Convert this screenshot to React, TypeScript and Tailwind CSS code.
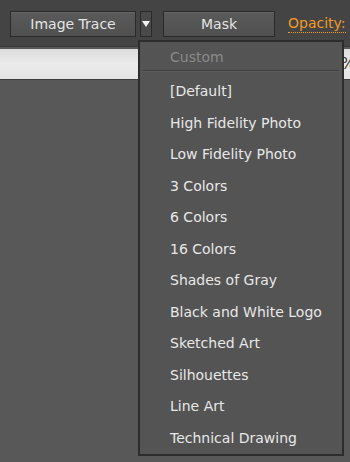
import React from "react";

const items = [
  "[Default]",
  "High Fidelity Photo",
  "Low Fidelity Photo",
  "3 Colors",
  "6 Colors",
  "16 Colors",
  "Shades of Gray",
  "Black and White Logo",
  "Sketched Art",
  "Silhouettes",
  "Line Art",
  "Technical Drawing",
];

export default function App() {
  return (
    <div
      className="relative w-[350px] h-[462px] overflow-hidden bg-[#585858] text-[#e8e8e8]"
      style={{ fontFamily: '"DejaVu Sans", "Liberation Sans", sans-serif' }}
    >
      {/* toolbar */}
      <div className="h-[47px] bg-[#444444] border-b border-[#3a3a3a] flex items-start pt-[11px] pl-[10px]">
        <div className="w-[126px] h-[26px] border border-[#2a2a2a] bg-gradient-to-b from-[#5a5a5a] to-[#505050] flex items-center justify-center text-[14px] text-[#e4e4e4] shadow-[inset_0_1px_0_#666]">
          Image Trace
        </div>
        <div className="ml-[4px] w-[12px] h-[26px] border border-[#2a2a2a] bg-[#4a4a4a] flex items-start justify-center pt-[9px]">
          <svg width="8" height="6" viewBox="0 0 8 6">
            <polygon points="0,0 8,0 4,6" fill="#f2f2f2" />
          </svg>
        </div>
        <div className="ml-[11px] w-[112px] h-[26px] border border-[#2a2a2a] bg-gradient-to-b from-[#5a5a5a] to-[#505050] flex items-center justify-center text-[14px] text-[#e4e4e4] shadow-[inset_0_1px_0_#666]">
          Mask
        </div>
        <div className="ml-[13px] h-[26px] flex items-center text-[14px] text-[#f09a2a] whitespace-nowrap">
          <span className="border-b border-dotted border-[#f09a2a] leading-[17px]">Opacity:</span>
        </div>
      </div>
      {/* light strip */}
      <div className="mt-[2px] h-[31px] bg-gradient-to-b from-[#dcdcdc] via-[#ebebeb] to-[#e4e4e4] border-b border-[#3e3e3e] flex justify-end items-center pr-[0px] text-[16px] text-[#333]">
        <span className="-mr-[6px]">%</span>
      </div>

      {/* dropdown menu */}
      <div className="absolute left-[138px] top-[40px] w-[206px] h-[416px] bg-[#545454] border-2 border-[#2c2c2c] flex flex-col">
        <div className="h-[32px] pl-[30px] flex items-center text-[14px] text-[#8a8a8a] pt-[2px]">Custom</div>
        <div className="mx-[3px] h-[2px] bg-[#3e3e3e] border-b border-[#5c5c5c]" />
        <div className="flex flex-col pt-[4px]">
          {items.map((t) => (
            <div key={t} className="h-[31.5px] pl-[30px] flex items-center text-[14px] text-[#e8e8e8] whitespace-nowrap">
              {t}
            </div>
          ))}
        </div>
      </div>
    </div>
  );
}
